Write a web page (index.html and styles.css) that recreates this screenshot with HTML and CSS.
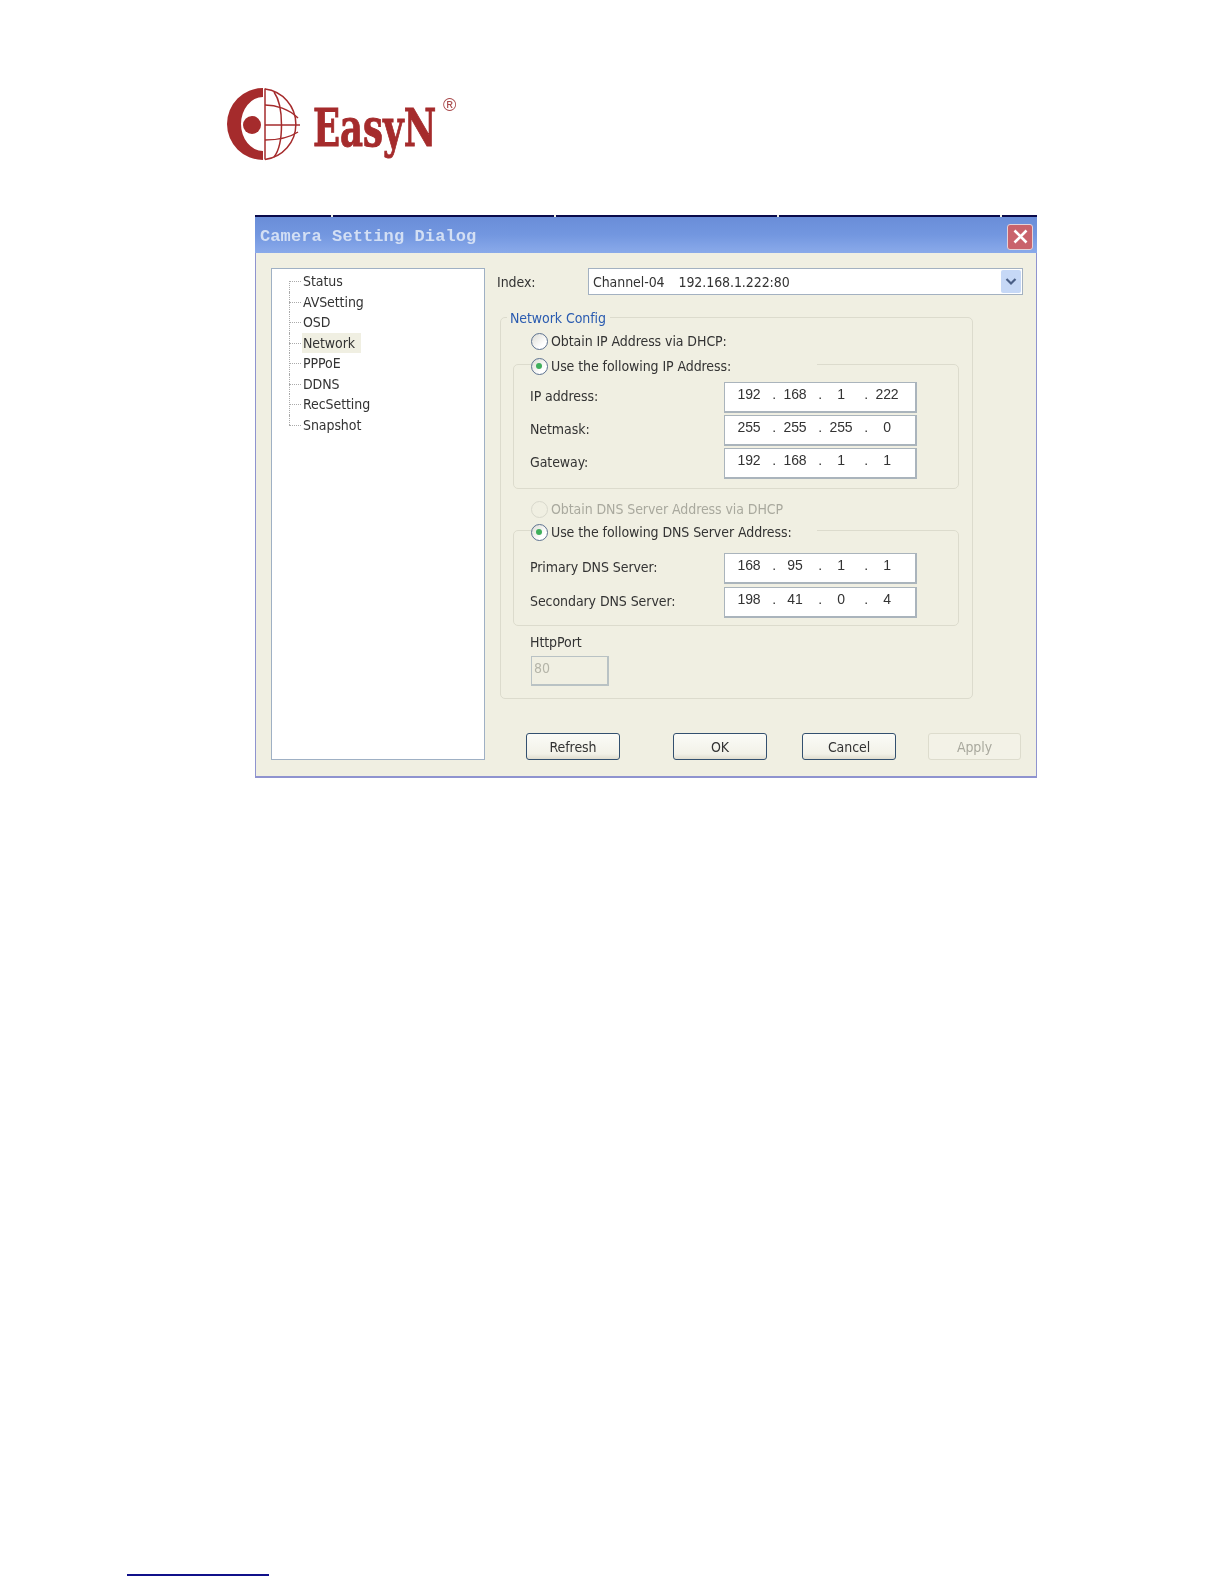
FILE: index.html
```html
<!DOCTYPE html>
<html lang="en">
<head>
<meta charset="utf-8">
<title>Camera Setting Dialog</title>
<link rel="stylesheet" href="styles.css">
</head>
<body>
<header class="logo">
  <svg class="logo-mark" width="76" height="76" viewBox="0 0 76 76" aria-hidden="true">
    <path class="fill" d="M37 2A36 36 0 0 0 37 74V65A22 27 0 0 1 37 11Z"/>
    <circle class="fill" cx="26" cy="39" r="9"/>
    <g class="grid">
      <path d="M39 2.500V73.500"/>
      <path d="M39 3A35 35.500 0 0 1 39 73.500"/>
      <path d="M39 19C50 19 63 23 72 32"/>
      <path d="M39 54C50 54 63 52 72 46"/>
      <path d="M39 39H74"/>
      <path d="M48 6C58 20 58 58 48 71"/>
    </g>
  </svg>
  <span class="logo-text">EasyN</span>
  <span class="logo-reg">®</span>
</header>

<main class="dialog">
  <div class="edge"><i></i><i></i><i></i><i></i><i></i></div>
  <div class="titlebar">
    <span class="title">Camera Setting Dialog</span>
    <span class="close" aria-label="Close">
      <svg width="17" height="17" viewBox="0 0 17 17"><path d="M2.500 2.500L14.500 14.500M14.500 2.500L2.500 14.500"/></svg>
    </span>
  </div>
  <div class="content">
    <ul class="tree">
      <li><span>Status</span></li>
      <li><span>AVSetting</span></li>
      <li><span>OSD</span></li>
      <li><span class="selected">Network</span></li>
      <li><span>PPPoE</span></li>
      <li><span>DDNS</span></li>
      <li><span>RecSetting</span></li>
      <li><span>Snapshot</span></li>
    </ul>
    <section class="panel">
      <div class="index-row">
        <span class="index-label">Index:</span>
        <div class="combo">
          <span class="combo-text">Channel-04<b class="combo-gap"></b>192.168.1.222:80</span>
          <span class="combo-btn">
            <svg width="12" height="10" viewBox="0 0 12 10"><path d="M1.500 2L6 6.500L10.500 2"/></svg>
          </span>
        </div>
      </div>

      <fieldset class="group">
        <legend class="group-title">Network Config</legend>
        <div class="radio-row"><span class="radio"></span>Obtain IP Address via DHCP:</div>

        <fieldset class="subgroup sub-ip">
          <legend class="sub-legend"><span class="radio checked"></span>Use the following IP Address:</legend>
          <div class="rows">
            <div class="row"><span class="row-label">IP address:</span>
              <div class="ip"><span>192</span><i>.</i><span>168</span><i>.</i><span>1</span><i>.</i><span>222</span></div></div>
            <div class="row"><span class="row-label">Netmask:</span>
              <div class="ip"><span>255</span><i>.</i><span>255</span><i>.</i><span>255</span><i>.</i><span>0</span></div></div>
            <div class="row"><span class="row-label">Gateway:</span>
              <div class="ip"><span>192</span><i>.</i><span>168</span><i>.</i><span>1</span><i>.</i><span>1</span></div></div>
          </div>
        </fieldset>

        <div class="radio-row disabled"><span class="radio"></span>Obtain DNS Server Address via DHCP</div>

        <fieldset class="subgroup sub-dns">
          <legend class="sub-legend"><span class="radio checked"></span>Use the following DNS Server Address:</legend>
          <div class="rows">
            <div class="row"><span class="row-label">Primary DNS Server:</span>
              <div class="ip"><span>168</span><i>.</i><span>95</span><i>.</i><span>1</span><i>.</i><span>1</span></div></div>
            <div class="row"><span class="row-label">Secondary DNS Server:</span>
              <div class="ip"><span>198</span><i>.</i><span>41</span><i>.</i><span>0</span><i>.</i><span>4</span></div></div>
          </div>
        </fieldset>

        <div class="port">
          <div class="port-label">HttpPort</div>
          <div class="port-input">80</div>
        </div>
      </fieldset>

      <div class="buttons">
        <span class="btn btn-refresh">Refresh</span>
        <span class="btn btn-ok">OK</span>
        <span class="btn btn-cancel">Cancel</span>
        <span class="btn btn-apply">Apply</span>
      </div>
    </section>
  </div>
</main>

<footer class="footnote"></footer>
</body>
</html>
```
FILE: styles.css
```css
* { box-sizing: border-box; }
html, body { margin: 0; padding: 0; background: #fff; }
body {
  height: 1584px;
  overflow: hidden;
  font-family: "DejaVu Sans", "Liberation Sans", sans-serif;
  font-stretch: condensed;
  font-size: 14px;
  letter-spacing: -.08px;
  color: #333;
}

/* logo */
.logo {
  display: flex;
  align-items: flex-start;
  height: 76px;
  margin: 86px 0 0 226px;
  filter: blur(.3px);
}
.logo-mark { flex: none; }
.fill { fill: #a52b2c; }
.grid path { fill: none; stroke: #a52b2c; stroke-width: 1.500; }
.logo-text {
  display: block;
  width: 124px;
  margin: 8px 0 0 11px;
  font-family: "DejaVu Serif", "Liberation Serif", serif;
  font-stretch: normal;
  font-weight: bold;
  font-size: 53px;
  letter-spacing: 0;
  line-height: 66px;
  color: #a52b2c;
  -webkit-text-stroke: 1px #a52b2c;
  transform: scaleX(.67);
  transform-origin: left center;
  white-space: nowrap;
}
.logo-reg {
  margin: 9px 0 0 6px;
  font-family: "Liberation Sans", sans-serif;
  font-stretch: normal;
  font-size: 18px;
  line-height: 20px;
  color: #a8484a;
}

/* window */
.dialog {
  width: 782px;
  height: 563px;
  margin: 53px 0 0 255px;
  display: flex;
  flex-direction: column;
  background: #f0efe2;
  border-left: 1px solid #8f94cf;
  border-right: 1px solid #8f94cf;
  border-bottom: 2px solid #8f93cf;
  filter: blur(.35px);
}
.edge {
  display: flex;
  gap: 2px;
  height: 2px;
  margin: 0 -1px;
}
.edge i { display: block; flex: 0 0 221px; background: #0a0a4a; }
.edge i:first-child { flex-basis: 76px; }
.edge i:last-child { flex: 1; }
.titlebar {
  flex: none;
  height: 36px;
  display: flex;
  align-items: center;
  justify-content: space-between;
  padding: 3px 4px 0 5px;
  margin: 0 -1px;
  background: linear-gradient(#6a8dd8 0, #7397e0 50%, #8aaaea 100%);
}
.title {
  font-family: "Liberation Mono", monospace;
  font-stretch: normal;
  font-weight: bold;
  font-size: 17px;
  letter-spacing: .1px;
  color: #d3dff4;
}
.close {
  width: 26px;
  height: 26px;
  display: flex;
  align-items: center;
  justify-content: center;
  background: #c9636c;
  border: 1px solid #e4d2d8;
  border-radius: 3px;
}
.close path { fill: none; stroke: #fff; stroke-width: 2.600; }

.content {
  flex: 1;
  display: flex;
  padding: 15px 13px 0 15px;
}

/* tree */
.tree {
  flex: none;
  width: 214px;
  height: 492px;
  margin: 0;
  padding: 2px 0 0 17px;
  list-style: none;
  background: #fff;
  border: 1px solid #9fb0c4;
}
.tree li {
  position: relative;
  height: 20.500px;
  line-height: 20.500px;
  padding-left: 13px;
}
.tree li::before {
  content: "";
  position: absolute;
  left: 0;
  top: 10px;
  width: 12px;
  border-top: 1px dotted #aaa;
}
.tree li::after {
  content: "";
  position: absolute;
  left: 0;
  top: 0;
  bottom: 0;
  border-left: 1px dotted #aaa;
}
.tree li:first-child::after { top: 10px; }
.tree li:last-child::after { bottom: 10px; }
.tree span { display: inline-block; padding: 0 6px 0 1px; }
.tree .selected { background: #f0efe2; }

/* right panel */
.panel {
  flex: none;
  width: 526px;
  margin-left: 12px;
  display: flex;
  flex-direction: column;
}
.index-row {
  display: flex;
  align-items: center;
  height: 27px;
}
.index-label { width: 91px; }
.combo {
  flex: 1;
  height: 27px;
  display: flex;
  align-items: center;
  justify-content: space-between;
  padding: 0 1px 0 4px;
  background: #fff;
  border: 1px solid #a3b1c1;
}
.combo-gap { display: inline-block; width: 14px; }
.combo-btn {
  width: 20px;
  height: 23px;
  display: flex;
  align-items: center;
  justify-content: center;
  background: #c6d8f6;
  border-radius: 2px;
}
.combo-btn path { fill: none; stroke: #4a5f86; stroke-width: 2.200; }

.group {
  width: 473px;
  height: 390px;
  margin: 14px 0 0 3px;
  padding: 0 13px 0 12px;
  min-width: 0;
  border: 1px solid #dcdbcd;
  border-radius: 5px;
}
.group-title {
  margin-left: -6px;
  padding: 0 4px 0 3px;
  height: 16px;
  line-height: 18px;
  color: #2a5bb0;
}
.radio-row {
  display: flex;
  align-items: center;
  height: 20px;
  margin-left: 18px;
  margin-top: 6px;
}
.radio {
  flex: none;
  position: relative;
  width: 17px;
  height: 17px;
  margin-right: 3px;
  border: 1.500px solid #5d7290;
  border-radius: 50%;
  background: linear-gradient(135deg, #dcdcd4, #fff 70%);
}
.radio.checked::after {
  content: "";
  position: absolute;
  left: 4px;
  top: 4px;
  width: 6px;
  height: 6px;
  border-radius: 50%;
  background: #3faf5c;
}
.radio-row.disabled { color: #a9a99e; margin-top: 0; }
.radio-row.disabled .radio { border-color: #d8d8cc; background: none; }

.subgroup {
  min-width: 0;
  margin: 0;
  padding: 0 0 0 16px;
  border: 1px solid #dcdbcd;
  border-radius: 5px;
}
.sub-ip { height: 134px; margin-top: 4px; margin-bottom: 10px; }
.sub-dns { height: 105px; margin-top: 2px; }
.sub-legend {
  display: flex;
  align-items: center;
  width: 286px;
  height: 18px;
  margin-left: 1px;
  padding: 5px 0 0 0;
  line-height: 13px;
}
.rows { display: flex; flex-direction: column; }
.sub-ip .rows { margin-top: 9px; gap: 2px; }
.sub-dns .rows { margin-top: 14px; gap: 3px; }
.row { display: flex; align-items: center; height: 31px; }
.row-label { width: 194px; padding-bottom: 3px; }
.ip {
  display: flex;
  width: 193px;
  height: 31px;
  padding: 2px 0 0 5px;
  line-height: 18px;
  background: #fff;
  border: 1px solid #aab4bc;
  border-width: 1px 2px 2px 1px;
  font-family: "Liberation Sans", sans-serif;
  font-stretch: normal;
}
.ip span { flex: 0 0 38px; text-align: center; }
.ip i { flex: 0 0 8px; text-align: right; font-style: normal; }

.port { margin: 6px 0 0 17px; }
.port-label { height: 24px; line-height: 20px; }
.port-input {
  width: 78px;
  height: 30px;
  margin-left: 1px;
  padding-left: 2px;
  line-height: 23px;
  color: #b4b4a8;
  border: 1px solid #b9c2c4;
  border-width: 1px 2px 2px 1px;
}

.buttons {
  display: flex;
  margin-top: 34px;
}
.btn {
  width: 94px;
  height: 27px;
  display: flex;
  align-items: center;
  justify-content: center;
  border: 1.500px solid #33506f;
  border-radius: 3px;
  background: linear-gradient(#fbfbf7, #f2f1e8 80%, #e0ddcf);
}
.btn-refresh { margin-left: 29px; }
.btn-ok { margin-left: 53px; }
.btn-cancel { margin-left: 35px; }
.btn-apply {
  margin-left: 32px;
  width: 93px;
  color: #a9a99e;
  border: 1px solid #dddccd;
  background: #f3f2e7;
}

.footnote {
  width: 142px;
  height: 2px;
  margin: 796px 0 0 127px;
  background: #10108a;
}
```
